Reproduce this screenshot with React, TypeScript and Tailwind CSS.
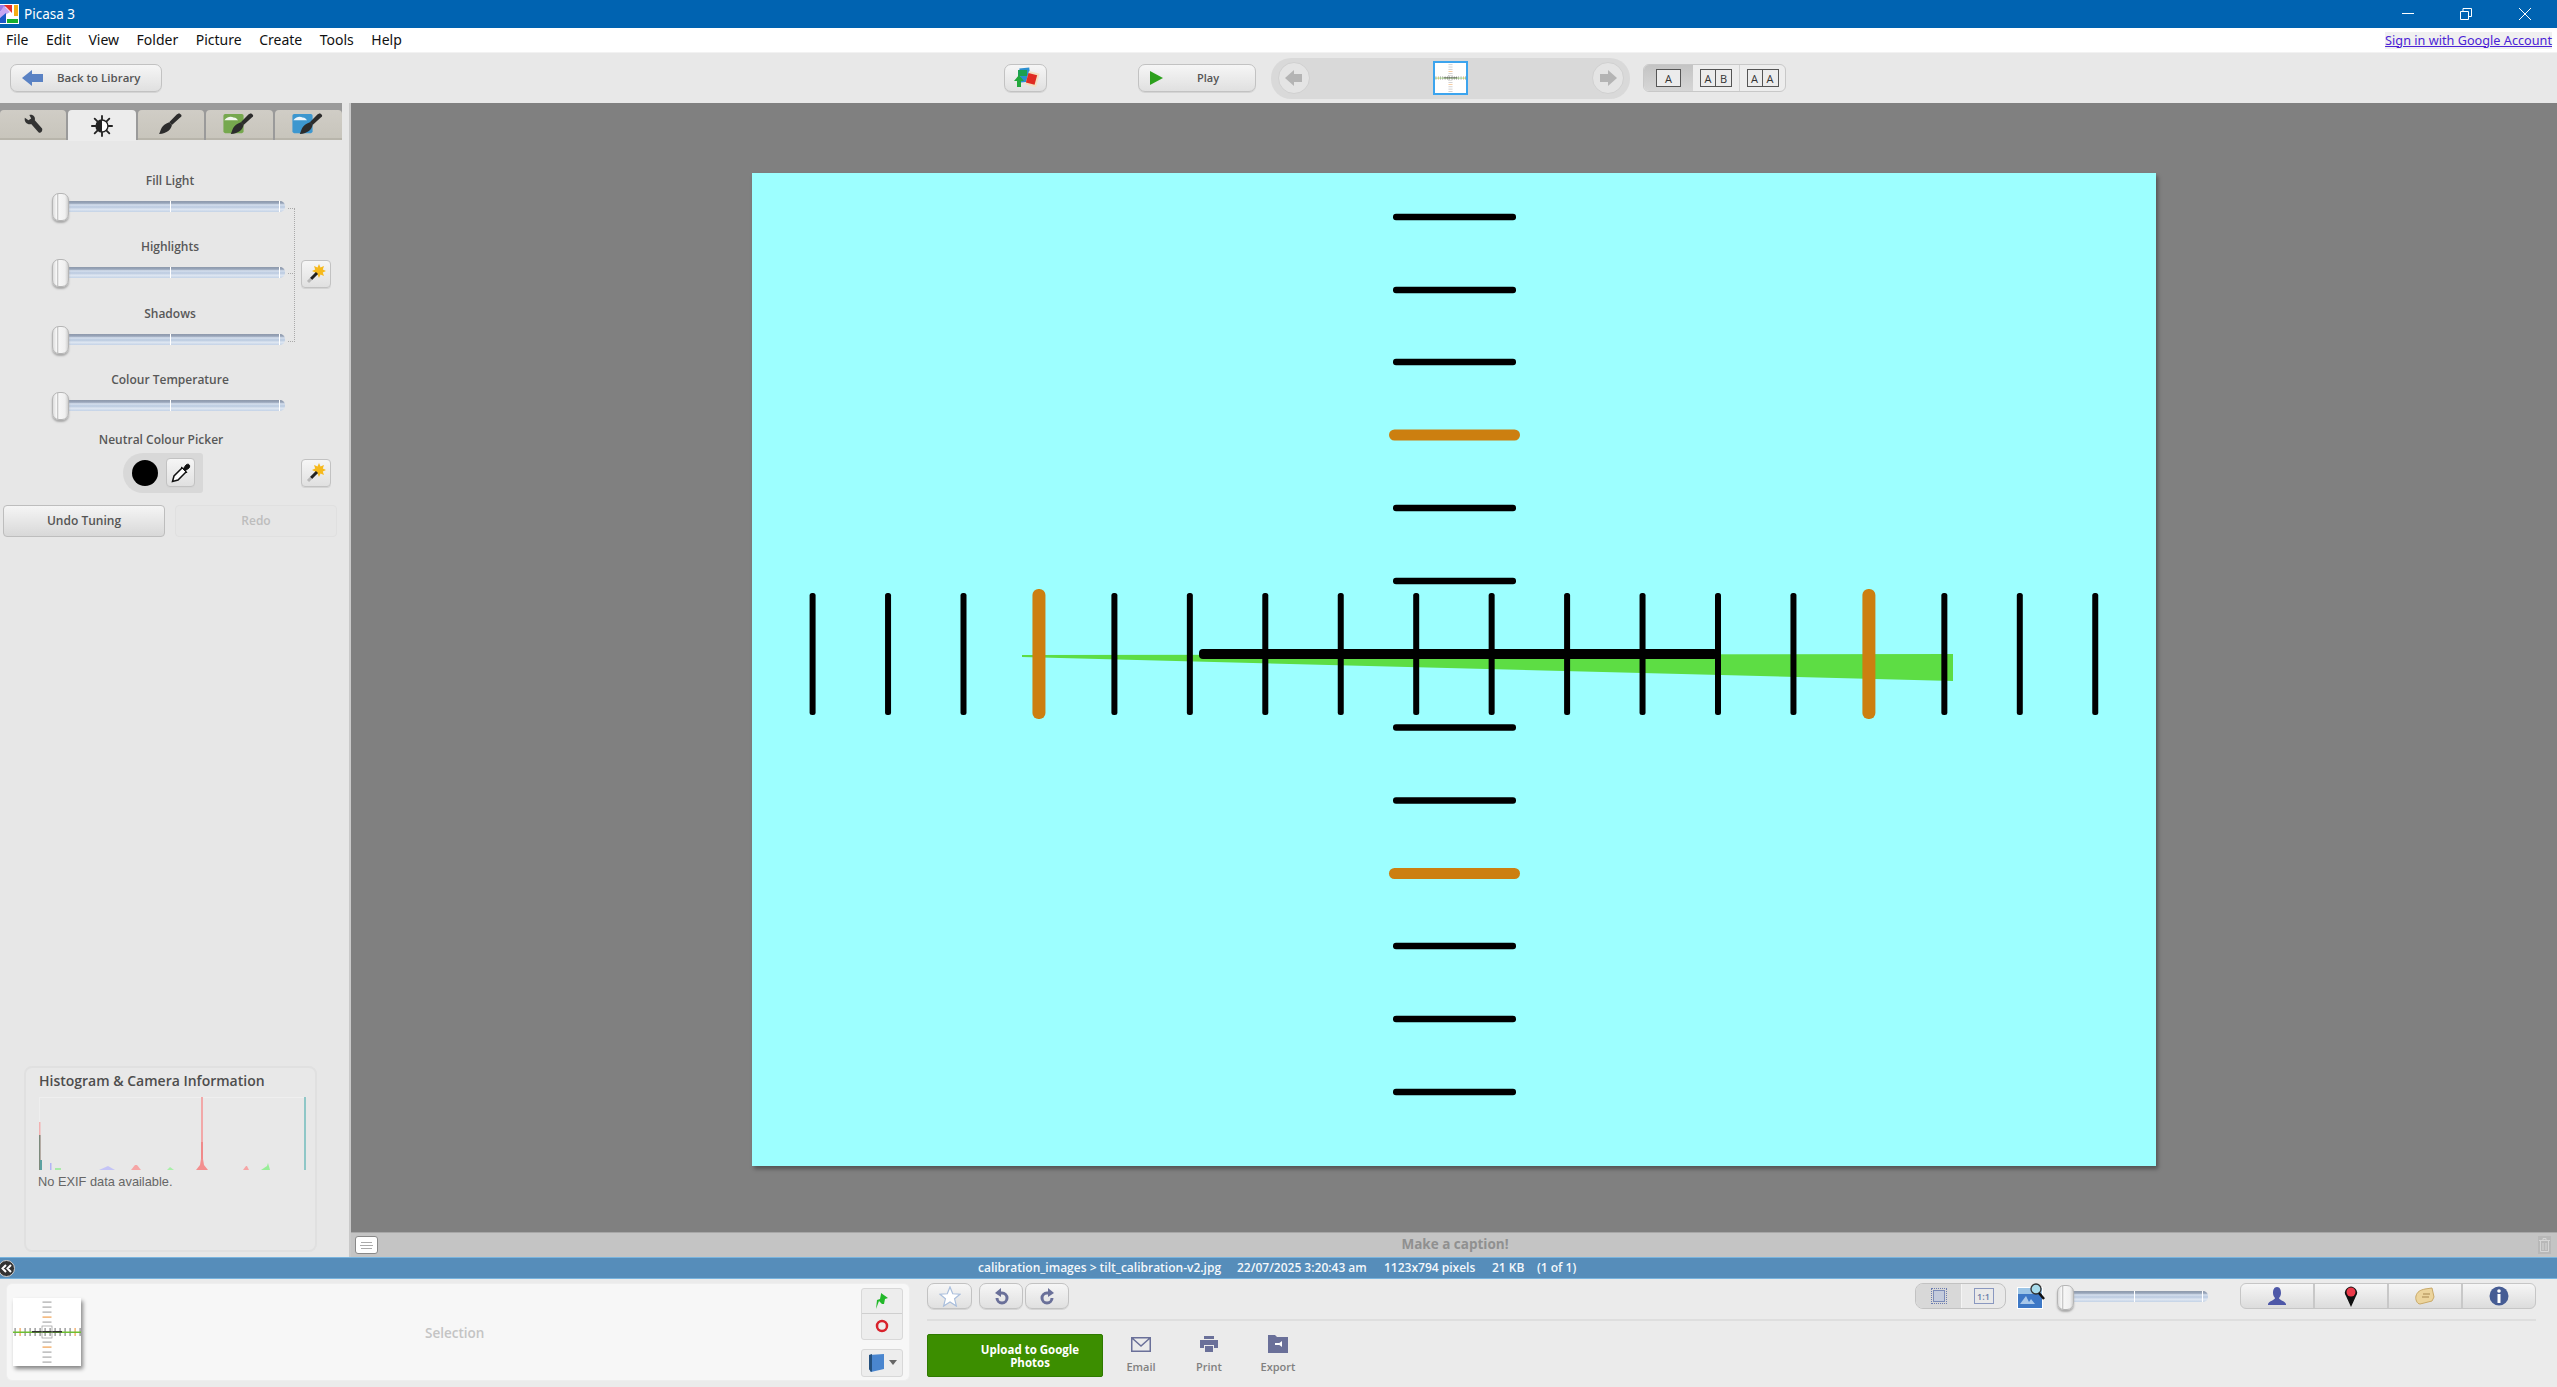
import React from "react";

const ui = "font-['Open_Sans','Noto_Sans',sans-serif]";
const btn = "border border-[#c2c2c2] bg-[linear-gradient(#f6f6f6,#e0e0e0)] shadow-[0_1px_0_#d4d4d4]";

function Logo() {
  return (
    <svg width="19" height="20" viewBox="0 0 19 20" className="block">
      <rect width="19" height="20" fill="#fff" />
      <polygon points="0,1 7,1 0,8" fill="#9a7be8" />
      <polygon points="4,2 10,8 0,14 0,8" fill="#c9a6f2" />
      <polygon points="0,14 6,9 6,19 0,19" fill="#1c58c8" />
      <polygon points="4,1 12,1 12,9" fill="#e8322c" />
      <rect x="14" y="1" width="4" height="11" fill="#f5ae14" />
      <rect x="7" y="15" width="11" height="4" fill="#16b02e" />
    </svg>
  );
}

function Wrench() {
  return (
    <svg width="20" height="20" viewBox="0 0 22 22">
      <path d="M2 4 L6 7 L9 5 L7 1 C11 0 14 3 13 7 L21 16 C22 19 19 22 17 20 L9 11 C5 12 1 9 2 4Z" fill="#333" />
    </svg>
  );
}

function SunIcon() {
  return (
    <svg width="22" height="22" viewBox="0 0 24 24">
      <g stroke="#222" strokeWidth="2" strokeLinecap="round">
        <path d="M12 1v4M12 19v4M1 12h4M19 12h4M4 4l3 3M17 17l3 3M20 4l-3 3M7 17l-3 3" />
      </g>
      <circle cx="12" cy="12" r="6.5" fill="#fff" stroke="#222" strokeWidth="1.5" />
      <path d="M12 5.5a6.5 6.5 0 0 0 0 13Z" fill="#222" />
    </svg>
  );
}

function Brush({ bg }: { bg?: string }) {
  if (!bg) {
    return (
      <svg width="24" height="22" viewBox="8 0 26 24">
        <path d="M31 1 C33 2 33 4 31 5 L22 13 L19 10 L27 2 C28 1 30 0 31 1Z" fill="#2c2c2c" />
        <path d="M19 10 L22 13 C21 18 17 22 8 23 C10 19 10 13 19 10Z" fill="#2c2c2c" />
      </svg>
    );
  }
  return (
    <svg width="32" height="22" viewBox="0 0 34 24">
      <rect x="0" y="1" width="22" height="21" rx="2" fill={bg} />
      <path d="M1 8 C5 3 9 4 11 5 C14 5 15 7 16 8 L1 8Z" fill="#fff" opacity="0.9" />
      <path d="M31 1 C33 2 33 4 31 5 L22 13 L19 10 L27 2 C28 1 30 0 31 1Z" fill="#2c2c2c" />
      <path d="M19 10 L22 13 C21 18 17 22 8 23 C10 19 10 13 19 10Z" fill="#2c2c2c" />
    </svg>
  );
}

function Wand() {
  return (
    <svg width="20" height="20" viewBox="0 0 20 20">
      <path d="M13 0l1.500 3.500 3.500-1.500-1.200 3.500L20 7l-3.200 1.500L18 12l-3.500-1.500L13 14l-1.500-3.500L8 12l1.200-3.500L6 7l3.200-1.500L8 2l3.500 1.500z" fill="#f6b91c" />
      <path d="M11 9 L5 15" stroke="#222" strokeWidth="3" />
      <path d="M5 15 L2 18" stroke="#b8b8b8" strokeWidth="3" />
    </svg>
  );
}

function Slider({ track, tick1, tick2, thumb }: { track: string; tick1: string; tick2: string; thumb: string }) {
  return (
    <div className={`relative h-[11px] rounded-r-[5px] bg-[linear-gradient(#8e99ab_0,#98a5ba_20%,#d6e0ee_35%,#b9c9df_55%,#dfe7f2_75%,#c3d2e6_100%)] ${track}`}>
      <div className={`absolute top-0 h-[11px] w-[1px] bg-white ${tick1}`} />
      <div className={`absolute top-0 h-[11px] w-[1px] bg-white ${tick2}`} />
      <div className={`absolute rounded-[7px] border border-[#b5b5b5] bg-[linear-gradient(90deg,#dcdcdc,#f8f8f8_25%,#c9c9c9_30%,#f6f6f6_40%,#f0f0f0_80%,#d0d0d0)] shadow-[0_2px_2px_#aaa] ${thumb}`} />
    </div>
  );
}

function ToolSlider({ label }: { label: string }) {
  return (
    <div className="flex h-[66.4px] flex-col">
      <div className="h-[36px] w-[340px] pt-[11px] text-center text-[12px] leading-[16px] font-semibold text-[#585858]">{label}</div>
      <Slider track="ml-[60px] w-[225px] mt-[3px]" tick1="left-[110px]" tick2="left-[219px]" thumb="left-[-8px] top-[-8px] h-[28px] w-[17px]" />
    </div>
  );
}

function Tabs() {
  const tab = "flex h-[30px] w-[67px] items-center justify-center rounded-t-[4px] border-b-2 border-[#b8b5ab] bg-[linear-gradient(#d0cdc6,#c8c5bc)]";
  return (
    <div className="h-[37px] w-[342px] bg-[#9a9a9a] pt-[7px]">
      <div className="flex gap-[2px]">
        <div className={`${tab} w-[65px]`}><Wrench /></div>
        <div className="flex h-[31px] w-[68px] items-center justify-center rounded-t-[4px] bg-[#ececec]"><SunIcon /></div>
        <div className={tab}><Brush /></div>
        <div className={tab}><Brush bg="#76a84e" /></div>
        <div className={`${tab} w-[68px]`}><Brush bg="#3d97cf" /></div>
      </div>
    </div>
  );
}

function Histogram() {
  return (
    <svg width="268" height="73" viewBox="0 0 268 73" className="ml-[13px] mt-[6px] block">
      <path d="M0.5 0.5H267.5" stroke="#efefef" />
      <path d="M0.5 0V73" stroke="#eeeeee" />
      <rect x="0" y="25" width="1.5" height="48" fill="#f2b1b1" />
      <rect x="0" y="38" width="1.5" height="35" fill="#7c8a7c" />
      <rect x="1" y="63" width="2" height="10" fill="#5ca2a2" />
      <rect x="162" y="0" width="2" height="73" fill="#f2a8a8" />
      <rect x="162" y="45" width="2" height="28" fill="#f08a8a" />
      <polygon points="157,73 161,68 162,62 164,62 165,68 169,73" fill="#f38f8f" />
      <rect x="265" y="0" width="2" height="73" fill="#8fc7c7" />
      <polygon points="92,73 96,68 98,68 102,73" fill="#f6a6a6" />
      <polygon points="204,73 207,69 208,69 210,73" fill="#f6a6a6" />
      <polygon points="222,73 228,69 229,66 231,73" fill="#98ee98" />
      <polygon points="128,73 131,70 135,73" fill="#a8f0a8" />
      <rect x="11" y="66" width="1.5" height="7" fill="#b4b4f6" />
      <polygon points="60,73 69,69 76,73" fill="#c4c4f6" />
      <rect x="16" y="71" width="6" height="2" fill="#a8eaa8" />
    </svg>
  );
}

function Picture() {
  const xs = Array.from({ length: 18 }, (_, i) => i);
  const ys = [217, 290, 362, 435, 508, 581, 727.5, 800.5, 873.5, 946, 1019, 1092];
  return (
    <svg width="1404" height="993" viewBox="752 173 1404 993" className="block shrink-0 shadow-[2px_3px_4px_rgba(0,0,0,0.35)]">
      <rect x="752" y="173" width="1404" height="993" fill="#9dffff" />
      <polygon points="1022,655 1953,654 1953,681 1022,657" fill="#5ddd44" />
      {ys.map((y) =>
        y === 435 || y === 873.5 ? (
          <rect key={y} x="1389" y={y - 5.5} width="131" height="11" rx="5.5" fill="#cc7f10" />
        ) : (
          <rect key={y} x="1393" y={y - 3.25} width="123" height="6.5" rx="3" fill="#000" />
        )
      )}
      <rect x="1199" y="649" width="519" height="10" rx="4" fill="#000" />
      {xs.map((i) => {
        const x = 812.6 + i * 75.45;
        return i === 3 || i === 14 ? (
          <rect key={i} x={x - 6.5} y="589" width="13" height="130" rx="6" fill="#cc7f10" />
        ) : (
          <rect key={i} x={x - 3} y="593" width="6" height="122" rx="2.5" fill="#000" />
        );
      })}
    </svg>
  );
}

function MiniThumb({ w, h, line }: { w: number; h: number; line: number }) {
  const ys = [-30, -25, -20, -15, -10, 10, 15, 20, 25, 30];
  const xs = [-32, -27, -22, -17, -12, -7, -2, 3, 8, 13, 18, 23, 28, 33];
  return (
    <svg width={w} height={h} viewBox="-34 -34 68 68" preserveAspectRatio="none" className="block">
      <rect x="-34" y="-34" width="68" height="68" fill="#fff" />
      {ys.map((y) => (
        <rect key={y} x="-4.5" y={y - 0.5} width="9" height="1.2" fill={y === -15 || y === 15 ? "#f0a050" : "#aaa"} />
      ))}
      {xs.map((x) => (
        <rect key={x} x={x - 0.5} y="-4" width="1.2" height="8" fill={x === -27 || x === 28 ? "#f0a050" : "#888"} />
      ))}
      <rect x="-34" y="-0.5" width="68" height={line} fill="#6cc030" />
      <rect x="-15" y="-1" width="30" height="1.5" fill="#333" />
      <rect x="-5" y="-6" width="10" height="12" fill="none" stroke="#999" strokeWidth="0.7" />
    </svg>
  );
}

function LayoutIcon({ kind }: { kind: "A" | "AB" | "AA" }) {
  const cell = "flex h-[18px] w-[16px] items-center justify-center border border-[#555] bg-[#ececec] text-[11px] leading-none text-[#333]";
  return (
    <div className="flex">
      {kind === "A" && <div className={`${cell} w-[25px]`}>A</div>}
      {kind !== "A" && <div className={cell}>A</div>}
      {kind !== "A" && <div className={`${cell} border-l-0`}>{kind === "AB" ? "B" : "A"}</div>}
    </div>
  );
}

function TopBar() {
  return (
    <div className="flex h-[28px] items-center bg-[#0063b1] text-[13.5px] text-white">
      <div className="mt-[-1px]"><Logo /></div>
      <span className="ml-[5px] font-['Noto_Sans',sans-serif]">Picasa 3</span>
      <div className="ml-auto flex items-center">
        <svg width="12" height="2" className="mr-[46px] block"><rect width="12" height="1" fill="#fff" /></svg>
        <svg width="12" height="12" viewBox="0 0 12 12" className="mr-[47px] block" fill="none" stroke="#fff">
          <path d="M.5 3.5h8v8h-8zM3 3V.5h8.500v8H9" />
        </svg>
        <svg width="12" height="12" viewBox="0 0 12 12" className="mr-[26px] block" stroke="#fff">
          <path d="M0 0L12 12M12 0L0 12" />
        </svg>
      </div>
    </div>
  );
}

function MenuBar() {
  return (
    <div className="flex h-[24px] items-center bg-white pl-[6px] pr-[5px] text-[14px] leading-none text-[#111] font-['Noto_Sans',sans-serif]">
      <div className="flex gap-[17.500px]">
        {["File", "Edit", "View", "Folder", "Picture", "Create", "Tools", "Help"].map((m) => (
          <span key={m}>{m}</span>
        ))}
      </div>
      <a className="ml-auto bg-[#f0f0f0] text-[12.700px] leading-[17px] text-[#4b22d6] underline">Sign in with Google Account</a>
    </div>
  );
}

function Toolbar() {
  return (
    <div className="flex h-[51px] items-center border-t border-[#f2f2f2] bg-[#e8e8e8]">
      <div className={`ml-[10px] flex h-[28px] w-[152px] items-center rounded-[7px] ${btn}`}>
        <svg width="22" height="16" viewBox="0 0 22 16" className="ml-[11px]">
          <polygon points="0,8 10,0 10,4 21,4 21,12 10,12 10,16" fill="#5a82c4" />
        </svg>
        <span className="ml-[13px] text-[11.500px] font-semibold text-[#555]">Back to Library</span>
      </div>
      <div className={`ml-[842px] flex h-[28px] w-[43px] items-center justify-center rounded-[7px] ${btn}`}>
        <svg width="28" height="22" viewBox="0 0 28 22">
          <rect x="8" y="1" width="10" height="14" fill="#2a8fd0" transform="rotate(-6 13 8)" />
          <rect x="15" y="5" width="11" height="14" fill="#f2e0c0" transform="rotate(15 20 12)" />
          <rect x="15" y="7" width="9" height="10" fill="#e02c22" transform="rotate(15 20 12)" />
          <rect x="6" y="3" width="9" height="6" fill="#1ca050" />
          <polygon points="2,14 7,8 12,14 9,14 9,20 5,20 5,14" fill="#22a83c" />
        </svg>
      </div>
      <div className={`ml-[91px] flex h-[28px] w-[118px] items-center rounded-[7px] ${btn}`}>
        <svg width="14" height="14" viewBox="0 0 14 14" className="ml-[11px]"><polygon points="0,0 13,7 0,14" fill="#2ca01c" /></svg>
        <span className="ml-[33px] text-[11px] font-semibold text-[#555]">Play</span>
      </div>
      <div className="ml-[15px] flex h-[41px] w-[359px] items-center rounded-[20px] bg-[#d9d9d9] px-[7px]">
        <div className="flex h-[32px] w-[32px] items-center justify-center rounded-full border border-[#d0d0d0] bg-[#e4e4e4]">
          <svg width="18" height="16" viewBox="0 0 18 16"><polygon points="0,8 9,0 9,4 17,4 17,12 9,12 9,16" fill="#b4b4b4" /></svg>
        </div>
        <div className="ml-[123px] h-[34px] w-[35px] border-2 border-[#3ca4ee] bg-white"><MiniThumb w={31} h={30} line={1.2} /></div>
        <div className="ml-auto mr-[-1px] flex h-[32px] w-[32px] items-center justify-center rounded-full border border-[#d0d0d0] bg-[#e4e4e4]">
          <svg width="18" height="16" viewBox="0 0 18 16"><polygon points="18,8 9,0 9,4 1,4 1,12 9,12 9,16" fill="#b4b4b4" /></svg>
        </div>
      </div>
      <div className="ml-[13px] flex h-[28px] w-[143px] overflow-hidden rounded-[6px] border border-[#c8c8c8] bg-[#ededed]">
        <div className="flex w-[49px] items-center justify-center bg-[linear-gradient(#c4c4c4,#d6d6d6)]"><LayoutIcon kind="A" /></div>
        <div className="flex w-[47px] items-center justify-center border-r border-[#d2d2d2]"><LayoutIcon kind="AB" /></div>
        <div className="flex flex-1 items-center justify-center"><LayoutIcon kind="AA" /></div>
      </div>
    </div>
  );
}

function WandButton({ className }: { className: string }) {
  return (
    <div className={`flex h-[28px] w-[30px] items-center justify-center rounded-[4px] ${btn} ${className}`}>
      <Wand />
    </div>
  );
}

function Sidebar() {
  return (
    <div className="flex w-[351px] shrink-0 flex-col border-r-2 border-[#c9c9c9] bg-[#e7e7e7]">
      <Tabs />
      <div className="relative pt-[22px]">
        <div className="absolute left-[288px] top-[68px] h-[134px] w-[7px] border-y border-r border-dotted border-[#a9a9a9]" />
        <div className="absolute left-[288px] top-[133px] w-[7px] border-t border-dotted border-[#a9a9a9]" />
        <WandButton className="absolute left-[301px] top-[120px]" />
        <ToolSlider label="Fill Light" />
        <ToolSlider label="Highlights" />
        <ToolSlider label="Shadows" />
        <ToolSlider label="Colour Temperature" />
        <div className="w-[322px] pt-[4px] text-center text-[12px] leading-[16px] font-semibold text-[#585858]">Neutral Colour Picker</div>
        <div className="flex items-center">
          <div className="ml-[123px] mt-[5px] flex h-[40px] w-[80px] items-center rounded-l-[20px] rounded-r-[3px] bg-[#d8d8d8]">
            <div className="ml-[9px] h-[26px] w-[26px] rounded-full bg-black" />
            <div className={`ml-[8px] flex h-[29px] w-[29px] items-center justify-center rounded-[4px] ${btn}`}>
              <svg width="20" height="20" viewBox="0 0 20 20">
                <path d="M11 5 L3 13 L1.500 18.500 L7 17 L15 9" fill="#fff" stroke="#111" strokeWidth="1.500" />
                <path d="M10 4 L16 10 L14.500 7.500 L18 5 C20 2 17 0 15 2 L12.500 5.500Z" fill="#111" stroke="#111" />
              </svg>
            </div>
          </div>
          <WandButton className="ml-[98px] mt-[5px]" />
        </div>
        <div className="mt-[12px] flex gap-[10px] pl-[3px]">
          <div className="flex h-[32px] w-[162px] items-center justify-center rounded-[4px] border border-[#bdbdbd] bg-[linear-gradient(#f5f5f5,#d8d8d8)] text-[12px] font-semibold text-[#555]">Undo Tuning</div>
          <div className="flex h-[32px] w-[162px] items-center justify-center rounded-[4px] border border-[#e0e0e0] bg-[#e6e6e6] text-[12px] font-semibold text-[#bdbdbd]">Redo</div>
        </div>
      </div>
      <div className="mb-[5px] ml-[24px] mt-auto h-[186px] w-[293px] rounded-[8px] border-2 border-[#e0e0e0] bg-[#e8e8e8]">
        <div className="pl-[13px] pt-[3px] text-[14px] leading-[20px] font-semibold text-[#4d4d4d]">Histogram &amp; Camera Information</div>
        <Histogram />
        <div className="pl-[12px] pt-[4px] text-[12.800px] leading-[16px] text-[#666] font-['Liberation_Sans',sans-serif]">No EXIF data available.</div>
      </div>
    </div>
  );
}

function Workspace() {
  return (
    <div className="flex min-w-0 flex-1 flex-col">
      <div className="flex flex-1 items-center justify-center bg-[#808080] pt-[4px]">
        <Picture />
      </div>
      <div className="flex h-[25px] items-center border-t border-[#a8a8a8] bg-[#c4c4c4] pl-[4px] pr-[6px]">
        <div className="flex h-[18px] w-[23px] items-center justify-center rounded-[3px] border border-[#888] bg-white">
          <svg width="13" height="7" viewBox="0 0 13 7" stroke="#aaa"><path d="M1 .5h11M0 3.500h13M1 6.500h11" /></svg>
        </div>
        <div className="mt-[-2px] flex-1 pr-[6px] text-center text-[13.500px] font-bold text-[#909090]">Make a caption!</div>
        <div className="flex h-[18px] w-[13px] items-center justify-center bg-[#b8b8b8]">
          <svg width="11" height="14" viewBox="0 0 11 14" fill="none" stroke="#d6d6d6"><path d="M0 2.500h11M4 2V.5h3V2M1.500 3v10.500h8V3M4 5v7M7 5v7" /></svg>
        </div>
      </div>
    </div>
  );
}

function InfoBar() {
  return (
    <div className="relative flex h-[22px] items-center border-y border-[#79b4de] bg-[#568dba] text-[12px] font-semibold whitespace-pre text-[#f4f8fb]">
      <div className="absolute left-[-2px] top-[2px] flex h-[17px] w-[17px] items-center justify-center rounded-full border border-[#cfcfcf] bg-[#333]">
        <svg width="11" height="9" viewBox="0 0 11 9" fill="none" stroke="#fff" strokeWidth="2"><path d="M5 1L1.500 4.500 5 8M10 1L6.500 4.500 10 8" /></svg>
      </div>
      <div className="ml-[978px] flex">
        <span className="w-[259px]">calibration_images &gt; tilt_calibration-v2.jpg</span>
        <span className="w-[147px]">22/07/2025 3:20:43 am</span>
        <span className="w-[108px]">1123x794 pixels</span>
        <span className="w-[45px]">21 KB</span>
        <span>(1 of 1)</span>
      </div>
    </div>
  );
}

function Tray() {
  return (
    <div className="ml-[6px] mt-[4px] flex h-[98px] w-[904px] items-center rounded-[6px] border border-[#eeeeee] bg-[#f7f7f7]">
      <div className="ml-[6px] shadow-[2px_3px_4px_rgba(0,0,0,0.45)]"><MiniThumb w={68} h={68} line={1.5} /></div>
      <div className="ml-[344px] mt-[3px] text-[13.500px] font-semibold text-[#c4c4c4]">Selection</div>
      <div className="ml-auto mr-[6px] flex flex-col">
        <div className="flex h-[52px] w-[42px] flex-col rounded-[3px] border border-[#d8d8d8] bg-[#ededed]">
          <div className="flex flex-1 items-center justify-center border-b border-[#cfcfcf]">
            <svg width="14" height="18" viewBox="0 0 14 18"><path d="M6 1l7 5-3 1-1 5-2 0-3-3-3 8 1-9 3-1 1-5z" fill="#22b82a" /></svg>
          </div>
          <div className="flex flex-1 items-center justify-center">
            <svg width="14" height="14" viewBox="0 0 14 14"><circle cx="7" cy="7" r="5" fill="none" stroke="#d8222c" strokeWidth="2.500" /></svg>
          </div>
        </div>
        <div className="mt-[9px] flex h-[28px] w-[42px] items-center justify-center gap-[3px] rounded-[3px] border border-[#d8d8d8] bg-[#ededed]">
          <svg width="18" height="20" viewBox="0 0 18 20"><path d="M1 2l15-1v15L3 19 1 16z" fill="#4a86cf" /><path d="M1 2l3-1v17l-1 1-2-3z" fill="#24507e" /></svg>
          <svg width="8" height="5" viewBox="0 0 8 5"><polygon points="0,0 8,0 4,5" fill="#666" /></svg>
        </div>
      </div>
    </div>
  );
}

function ActionIcon({ label, children, className }: { label: string; children: React.ReactNode; className: string }) {
  return (
    <div className={`flex w-[60px] flex-col items-center ${className}`}>
      <div className="flex h-[20px] items-center">{children}</div>
      <div className="mt-[6px] text-[11px] leading-[14px] font-semibold text-[#808080]">{label}</div>
    </div>
  );
}

function Actions() {
  const ink = "#6a7099";
  return (
    <div className="ml-[17px] w-[1609px]">
      <div className="mt-[4px] flex h-[26px] items-center">
        <div className={`flex h-[26px] w-[45px] items-center justify-center rounded-[7px] ${btn}`}>
          <svg width="22" height="21" viewBox="0 0 24 23"><polygon points="12,1 15,8.500 23,9 17,14 19,22 12,17.500 5,22 7,14 1,9 9,8.500" fill="#fff" stroke="#a9bedc" strokeWidth="1.300" /></svg>
        </div>
        <div className={`ml-[7px] flex h-[26px] w-[44px] items-center justify-center rounded-[7px] ${btn}`}>
          <svg width="15" height="17" viewBox="0 0 15 17" fill="none" stroke={ink} strokeWidth="3"><path d="M4 5h4a5 5 0 1 1-5 5" /><polygon points="7,0 7,9 1,5" fill={ink} stroke="none" /></svg>
        </div>
        <div className={`ml-[2px] flex h-[26px] w-[44px] items-center justify-center rounded-[7px] ${btn}`}>
          <svg width="15" height="17" viewBox="0 0 15 17" fill="none" stroke={ink} strokeWidth="3"><path d="M11 5H7a5 5 0 1 0 5 5" /><polygon points="8,0 8,9 14,5" fill={ink} stroke="none" /></svg>
        </div>
        <div className="ml-[846px] flex h-[26px] w-[91px] overflow-hidden rounded-[8px] border border-[#c2c2c2] bg-[#e9e9e9]">
          <div className="flex w-[46px] items-center justify-center border-r border-[#f4f4f4] bg-[#d8d8d8]">
            <div className="border border-dotted border-[#6c7cb0] p-[1px]"><div className="h-[12px] w-[12px] border border-[#7c8cb8] bg-[#c4cbdc]" /></div>
          </div>
          <div className="flex flex-1 items-center justify-center">
            <div className="flex h-[16px] w-[20px] items-center justify-center border border-[#8a98c0] text-[9px] font-semibold leading-none text-[#6a7aa8]">1:1</div>
          </div>
        </div>
        <svg width="28" height="26" viewBox="0 0 28 26" className="ml-[11px]">
          <rect x="0" y="4" width="26" height="22" fill="#fff" />
          <rect x="1" y="5" width="24" height="20" fill="#3d78c6" />
          <path d="M1 5h24v6H1z" fill="#9cc5e6" />
          <path d="M3 21l6-8 3 6 2-3 4 5z" fill="#a8c8ea" />
          <circle cx="19" cy="6" r="5" fill="#a8dcec" stroke="#333" strokeWidth="1.300" />
          <path d="M22 10l5 6" stroke="#111" strokeWidth="2.500" />
        </svg>
        <Slider track="ml-[22px] w-[141px]" tick1="left-[67px]" tick2="left-[135px]" thumb="left-[-10px] top-[-6px] h-[25px] w-[17px]" />
        <div className="ml-[32px] flex h-[26px] w-[296px] overflow-hidden rounded-[6px] border border-[#c6c6c6] bg-[linear-gradient(#f6f6f6,#dcdcdc)]">
          <div className="flex flex-1 items-center justify-center border-r-2 border-[#c8c8c8]">
            <svg width="20" height="20" viewBox="0 0 20 20"><path d="M10 1c3 0 4 3 4 6 0 2-1 4-2 5 0 2 6 3 7 6v1H1v-1c1-3 7-4 7-6-1-1-2-3-2-5 0-3 1-6 4-6z" fill="#4e58a8" /></svg>
          </div>
          <div className="flex flex-1 items-center justify-center border-r-2 border-[#c8c8c8]">
            <svg width="14" height="22" viewBox="0 0 14 22"><path d="M7 22L2 11a6 6 0 1 1 10 0z" fill="#111" /><circle cx="7" cy="7" r="4.500" fill="#ec3a4a" /></svg>
          </div>
          <div className="flex flex-1 items-center justify-center border-r-2 border-[#c8c8c8]">
            <svg width="20" height="18" viewBox="0 0 20 18"><path d="M1 9c1-4 4-6 9-7l7-1 2 9-2 4-12 3c-3 0-5-5-4-8z" fill="#ecd49c" stroke="#c8a868" /><path d="M8 7h7M7 10h7" stroke="#a88850" /></svg>
          </div>
          <div className="flex flex-1 items-center justify-center">
            <svg width="20" height="20" viewBox="0 0 20 20"><circle cx="10" cy="10" r="9.500" fill="#465c94" /><rect x="8.500" y="8" width="3" height="9" fill="#fff" /><circle cx="10" cy="5" r="1.800" fill="#fff" /></svg>
          </div>
        </div>
      </div>
      <div className="mt-[10px] h-[2px] bg-[#dedede]" />
      <div className="mt-[13px] flex h-[43px] items-start">
        <div className="flex h-[43px] w-[176px] items-center justify-center rounded-[2px] border border-[#2f7a00] bg-[#3c8e00] pl-[30px] text-center text-[11.500px] leading-[13px] font-bold text-white">Upload to Google<br />Photos</div>
        <ActionIcon label="Email" className="ml-[8px]">
          <svg width="20" height="15" viewBox="0 0 20 15" fill="none" stroke={ink} strokeWidth="1.500"><path d="M.75.75h18.500v13.500H.75zM1 1l9 8 9-8" /></svg>
        </ActionIcon>
        <ActionIcon label="Print" className="ml-[8px]">
          <svg width="18" height="16" viewBox="0 0 18 16"><path d="M4 0h10v3H4zM0 4h18v8h-4v-3H4v3H0zM5 10h8v6H5z" fill={ink} /></svg>
        </ActionIcon>
        <ActionIcon label="Export" className="ml-[9px]">
          <svg width="20" height="18" viewBox="0 0 20 18"><path d="M0 0h7l2 2h11v16H0z" fill={ink} /><path d="M10 9l4-3v6z" fill="#fff" /><rect x="7" y="8" width="4" height="2" fill="#fff" /></svg>
        </ActionIcon>
      </div>
    </div>
  );
}

export default function App() {
  return (
    <div className={`flex h-[1387px] w-[2557px] flex-col overflow-hidden bg-[#ebebeb] ${ui}`}>
      <TopBar />
      <MenuBar />
      <Toolbar />
      <div className="flex h-[1154px] min-h-0">
        <Sidebar />
        <Workspace />
      </div>
      <InfoBar />
      <div className="flex flex-1 items-start">
        <Tray />
        <Actions />
      </div>
    </div>
  );
}
